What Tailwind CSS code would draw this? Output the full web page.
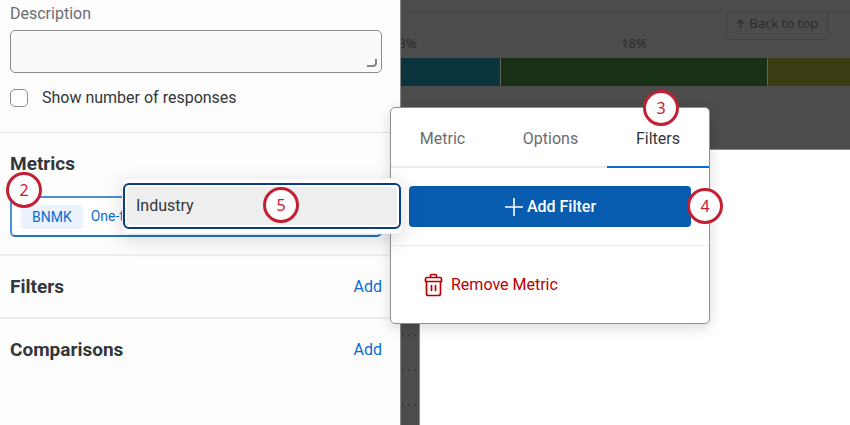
<!DOCTYPE html>
<html lang="en">
<head>
    <meta charset="UTF-8">
    <meta name="viewport" content="width=device-width, initial-scale=1.0">
    <title>Dashboard Widget Editor</title>
    <script src="https://cdn.jsdelivr.net/npm/@tailwindcss/browser@4"></script>
</head>
<body class="bg-white font-[Roboto,sans-serif] text-base text-[#32363a]">
    <div class="relative flex min-h-screen overflow-hidden">

        <!-- Edit pane -->
        <aside class="relative z-10 w-[401px] shrink-0 bg-[#fdfdfd] border-r border-[#8a8a8a]">
            <section class="h-[133px] px-[10px] pt-1 border-b border-[#e3e3e3]">
                <label for="description" class="block leading-5 text-[#6a6d70]">Description</label>
                <div class="relative mt-[6px] mr-2">
                    <textarea id="description" class="block w-full h-[43px] resize-none rounded-[5px] border border-[#8c8c8c] bg-[#fafafa] px-2 py-1"></textarea>
                    <svg class="absolute right-[5px] bottom-[5px] pointer-events-none" width="10" height="10" viewBox="0 0 10 10" fill="none" stroke="#858585" stroke-width="2">
                        <path d="M9 1v4a3 3 0 0 1-3 3H0"/>
                    </svg>
                </div>
                <div class="mt-[15px] flex items-center gap-[14px]">
                    <input type="checkbox" id="showResponses" class="size-[18px] appearance-none rounded-[5px] border border-[#8c8c8c] bg-white checked:bg-[#0a6ed1]">
                    <label for="showResponses" class="leading-5">Show number of responses</label>
                </div>
            </section>

            <section class="h-[123px] pl-[10px] pr-[18px] pt-[19px] border-b-2 border-[#ececec]">
                <h2 class="text-[19px] leading-6 font-bold">Metrics</h2>
                <div class="relative mt-5">
                    <button type="button" class="flex w-full h-[41px] items-center gap-2 rounded-[5px] border-2 border-[#4a90dc] border-b-[#1f73cc] bg-white px-[9px] text-[14px] text-[#0a6ed1]">
                        <span class="rounded-[3px] bg-[#ebf2fc] px-[11px] leading-6">BNMK</span>
                        <span>One-time</span>
                    </button>
                    <span class="absolute -left-1 -top-[24px] flex size-9 items-center justify-center rounded-full border-3 border-[#c22032] bg-white font-['Noto_Sans',sans-serif] leading-none text-[#c22032]">2</span>
                </div>
            </section>

            <section class="flex h-[63px] items-center justify-between pl-[10px] pr-[18px] border-b-2 border-[#ececec]">
                <h2 class="text-[19px] leading-6 font-bold">Filters</h2>
                <button type="button" class="text-[#0a6ed1]">Add</button>
            </section>
            <section class="flex h-[61px] items-center justify-between pl-[10px] pr-[18px]">
                <h2 class="text-[19px] leading-6 font-bold">Comparisons</h2>
                <button type="button" class="text-[#0a6ed1]">Add</button>
            </section>
        </aside>

        <!-- Dimmed dashboard, runs underneath the pane -->
        <main class="-ml-[93px] flex flex-1 flex-col bg-[#4c4c4c] text-[#2b2d31]">
            <div class="h-[12px] border-b border-[#464646]"></div>
            <div class="relative h-[138px] pt-[21px] border-b border-[#8a8a8a] font-['Noto_Sans',sans-serif] text-[13px]">
                <a href="#" class="absolute right-[22px] top-0 flex h-[28px] items-center gap-1 rounded-b-[5px] border border-t-0 border-[#424242] px-[9px] pb-1">
                    <svg width="9" height="10" viewBox="0 0 9 10" fill="none" stroke="currentColor" stroke-width="1.3">
                        <path d="M4.500 9V1M1 4.500 4.500 1 8 4.500"/>
                    </svg>
                    Back to top
                </a>
                <div class="flex gap-px text-center leading-5">
                    <span class="w-[192px]">13%</span>
                    <span class="w-[266px]">18%</span>
                </div>
                <div class="mt-[5px] flex h-[28px] gap-px bg-[#626262]">
                    <div class="w-[192px] bg-[#0a353d]"></div>
                    <div class="w-[266px] bg-[#183016]"></div>
                    <div class="flex-1 bg-[#3c3d12]"></div>
                </div>
            </div>
            <div class="flex flex-1">
                <div class="flex w-[112px] flex-col items-end gap-[33px] border-r border-[#8a8a8a] pt-[184px] pr-[3px]">
                    <svg width="14" height="2" fill="#393939"><path d="M0 0h2v2H0zM6 0h2v2H6zM12 0h2v2h-2z"/></svg>
                    <svg width="14" height="2" fill="#393939"><path d="M0 0h2v2H0zM6 0h2v2H6zM12 0h2v2h-2z"/></svg>
                    <svg width="14" height="2" fill="#393939"><path d="M0 0h2v2H0zM6 0h2v2H6zM12 0h2v2h-2z"/></svg>
                </div>
                <div class="flex-1 bg-white"></div>
            </div>
        </main>

        <!-- Metric popover -->
        <div class="absolute left-[390px] top-[107px] z-20 w-[320px] rounded-[5px] border border-[#8f8f8f] bg-white shadow-[0_4px_14px_rgba(0,0,0,0.14)]">
            <div class="flex h-[60px] border-b-2 border-[#ececec] text-[#6a6d70]" role="tablist">
                <button type="button" role="tab" class="flex-auto pt-[3px]">Metric</button>
                <button type="button" role="tab" class="flex-auto pt-[3px]">Options</button>
                <button type="button" role="tab" aria-selected="true" class="relative -mb-[2px] w-[102px] border-b-2 border-[#0a6ed1] pt-[3px] text-[#32363a]">
                    Filters
                    <span class="absolute left-9 -top-[18px] flex size-9 items-center justify-center rounded-full border-3 border-[#c22032] bg-white font-['Noto_Sans',sans-serif] leading-none text-[#c22032]">3</span>
                </button>
            </div>
            <div class="px-[18px] py-[18px] border-b border-[#ececec]">
                <div class="relative">
                    <button type="button" class="flex h-[41px] w-full items-center justify-center gap-[3px] rounded-[4px] bg-[#085caf] font-medium text-white">
                        <svg width="20" height="20" viewBox="0 0 20 20" fill="none" stroke="currentColor" stroke-width="1.6">
                            <path d="M10 1v18M1 10h18"/>
                        </svg>
                        Add Filter
                    </button>
                    <span class="absolute -right-8 top-[2px] flex size-9 items-center justify-center rounded-full border-3 border-[#c22032] bg-white font-['Noto_Sans',sans-serif] leading-none text-[#c22032]">4</span>
                </div>
            </div>
            <div class="flex h-[77px] items-center px-[33px]">
                <button type="button" class="flex items-center gap-2 text-[#b00]">
                    <svg width="19" height="24" viewBox="0 0 19 24" fill="none" stroke="currentColor" stroke-width="1.7" stroke-linejoin="round" stroke-linecap="round">
                        <path d="M6.500 4V2.500Q6.500 1.500 7.500 1.500H11.500Q12.500 1.500 12.500 2.500V4M3 4.500H16Q17.500 4.500 17.500 6V8.500H1.500V6Q1.500 4.500 3 4.500ZM2.500 8.500V20.500Q2.500 22.500 4.500 22.500H14.500Q16.500 22.500 16.500 20.500V8.500M7.500 12.500V17.500M11.500 12.500V17.500"/>
                    </svg>
                    Remove Metric
                </button>
            </div>
        </div>

        <!-- Filter field menu -->
        <div class="absolute left-[122px] top-[178px] z-30 w-[280px] rounded-[4px] border border-[#f0f0f0] bg-white py-1 shadow-[0_6px_20px_rgba(0,0,0,0.15)]" role="menu">
            <button type="button" role="menuitem" class="relative block h-[46px] w-full rounded-[6px] border-2 border-[#0b3d85] bg-white p-[2px] text-left">
                <span class="flex h-full items-center rounded-[3px] bg-[#eee] px-[9px]">Industry</span>
                <span class="absolute left-[138px] top-[2px] flex size-9 items-center justify-center rounded-full border-3 border-[#c22032] bg-white font-['Noto_Sans',sans-serif] leading-none text-[#c22032]">5</span>
            </button>
        </div>
    </div>
</body>
</html>
